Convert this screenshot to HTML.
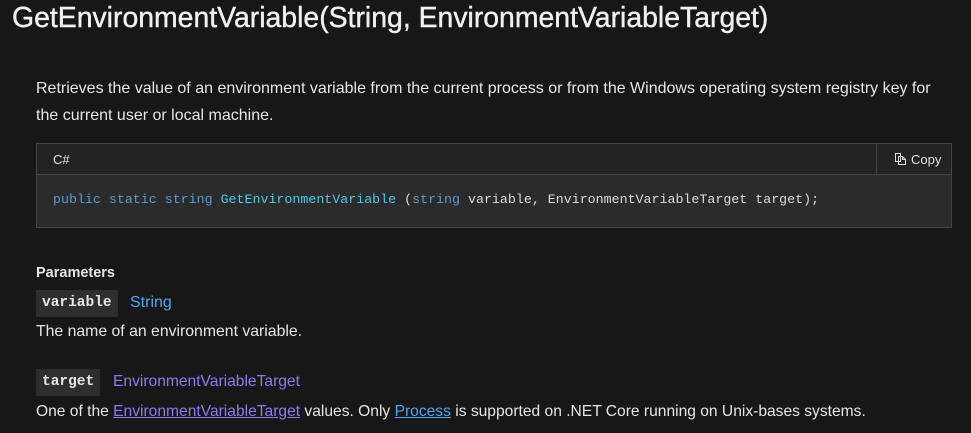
<!DOCTYPE html>
<html><head><style>
body{margin:0;background:#171717;width:971px;height:433px;overflow:hidden;font-family:"Liberation Sans",sans-serif;color:#e6e6e6;position:relative}
.a{position:absolute;white-space:nowrap}
h1{position:absolute;left:12px;top:2px;margin:0;font-size:28.4px;font-weight:normal;color:#f0f0f0;-webkit-text-stroke:0.4px #f0f0f0;white-space:nowrap}
.p{font-size:15.8px;color:#e6e6e6}
.box{position:absolute;left:36px;top:143px;width:914px;height:83px;border:1px solid #454545;background:#2b2b2b}
.hd{position:absolute;left:0;top:0;width:914px;height:30px;background:#232323;border-bottom:1px solid #454545}
.cp{position:absolute;left:839px;top:0;width:75px;height:30px;border-left:1px solid #454545;font-size:13px;color:#e0e0e0}
code{font-family:"Liberation Mono",monospace;font-size:13.3px}
.b{position:absolute;background:#2e2e2e;font-family:"Liberation Mono",monospace;font-weight:bold;font-size:14.5px;color:#e6e6e6;padding:0 6px;line-height:27px}
</style></head><body>
<h1>GetEnvironmentVariable(String, EnvironmentVariableTarget)</h1>
<div class="a p" style="left:36px;top:80px;font-size:16px">Retrieves the value of an environment variable from the current process or from the Windows operating system registry key for</div>
<div class="a p" style="left:36px;top:107px;font-size:16px">the current user or local machine.</div>
<div class="box"><div class="hd"><span class="a" style="left:16px;top:8px;font-size:13px">C#</span>
<div class="cp"><svg class="a" style="left:17px;top:8px" width="13" height="13" viewBox="0 0 13 13" fill="none" stroke="#ddd" stroke-width="1"><path d="M1.5 1.5h5l0 0v8h-5z"/><path d="M4.5 4.5h4l3 3v5h-7z"/><path d="M8.5 4.5v3h3"/></svg><span class="a" style="left:34px;top:8px">Copy</span></div></div>
<code class="a" style="left:16px;top:48px"><span style="color:#569cd6">public static string </span><span style="color:#4ec9f0">GetEnvironmentVariable</span><span style="color:#dcdcdc"> (</span><span style="color:#569cd6">string</span><span style="color:#dcdcdc"> variable, EnvironmentVariableTarget target);</span></code></div>
<div class="a" style="left:36px;top:265px;font-size:14.5px;font-weight:bold">Parameters</div>
<div class="b" style="left:36px;top:290px">variable</div>
<div class="a p" style="left:130px;top:294px;color:#4ea8f5;font-size:16px">String</div>
<div class="a p" style="left:36px;top:323px">The name of an environment variable.</div>
<div class="b" style="left:36px;top:369px">target</div>
<div class="a p" style="left:113px;top:373px;color:#8b7cf0;font-size:15.6px">EnvironmentVariableTarget</div>
<div class="a p" style="left:36px;top:403px;font-size:15.6px">One of the <u style="color:#8b7cf0">EnvironmentVariableTarget</u> values. Only <u style="color:#4ea8f5">Process</u> is supported on .NET Core running on Unix-bases systems.</div>
</body></html>
